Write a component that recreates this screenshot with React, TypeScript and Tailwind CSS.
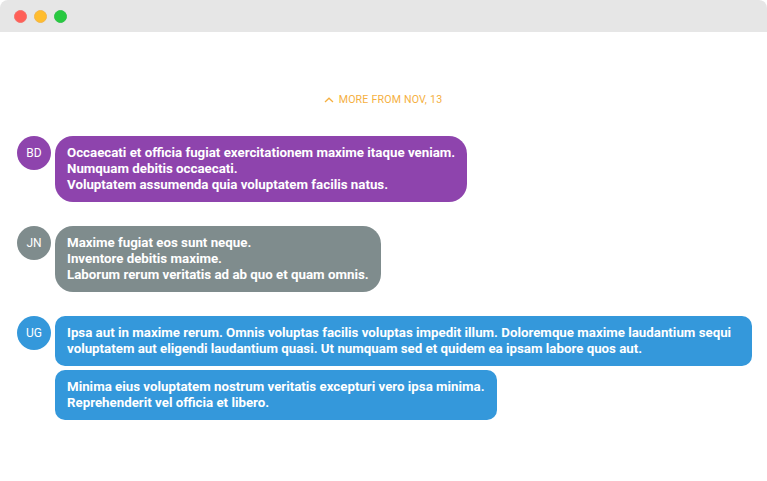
import React from 'react';

interface Group {
  initials: string;
  color: string;
  radius: string;
  messages: string[][];
}

const groups: Group[] = [
  {
    initials: 'BD',
    color: 'bg-[#8e44ad]',
    radius: 'rounded-[18px]',
    messages: [[
      'Occaecati et officia fugiat exercitationem maxime itaque veniam.',
      'Numquam debitis occaecati.',
      'Voluptatem assumenda quia voluptatem facilis natus.',
    ]],
  },
  {
    initials: 'JN',
    color: 'bg-[#7f8c8d]',
    radius: 'rounded-[18px]',
    messages: [[
      'Maxime fugiat eos sunt neque.',
      'Inventore debitis maxime.',
      'Laborum rerum veritatis ad ab quo et quam omnis.',
    ]],
  },
  {
    initials: 'UG',
    color: 'bg-[#3498db]',
    radius: 'rounded-[10px]',
    messages: [
      ['Ipsa aut in maxime rerum. Omnis voluptas facilis voluptas impedit illum. Doloremque maxime laudantium sequi voluptatem aut eligendi laudantium quasi. Ut numquam sed et quidem ea ipsam labore quos aut.'],
      [
        'Minima eius voluptatem nostrum veritatis excepturi vero ipsa minima.',
        'Reprehenderit vel officia et libero.',
      ],
    ],
  },
];

export default function App() {
  return (
    <div className="w-[767px] h-[481px] bg-white overflow-hidden font-['Roboto',sans-serif]">
      <div className="h-8 bg-[#e6e6e6] rounded-t-lg flex items-center gap-[7px] pl-[14px] pt-px">
        <span className="w-[13px] h-[13px] rounded-full bg-[#ff5f57] border border-[#f5716a]" />
        <span className="w-[13px] h-[13px] rounded-full bg-[#ffbd2e] border border-[#f2b64a]" />
        <span className="w-[13px] h-[13px] rounded-full bg-[#28c940] border border-[#2fc24a]" />
      </div>

      <div className="pt-[61px] pl-[17px] pr-[15px]">
        <div className="flex items-center justify-center gap-[5px] h-[14px] pr-[3px] text-[10.6px] leading-[14px] text-[#f5b041] uppercase tracking-[0.2px]">
          <svg width="10" height="6" viewBox="0 0 10 6" fill="none" stroke="#f5b041" strokeWidth="1.3">
            <path d="M1 5 L5 1.2 L9 5" />
          </svg>
          <span>More from Nov, 13</span>
        </div>

        <div className="mt-[29px] flex flex-col gap-6">
          {groups.map(group => (
            <div key={group.initials} className="flex gap-1 items-start">
              <div className={`w-[34px] h-[34px] shrink-0 rounded-full flex items-center justify-center text-white text-xs pb-px ${group.color}`}>
                {group.initials}
              </div>
              <div className="flex-1 min-w-0 flex flex-col gap-1 items-start">
                {group.messages.map((lines, index) => (
                  <div
                    key={index}
                    className={`px-3 py-[9px] text-white font-bold text-[13.3px] leading-4 ${group.color} ${group.radius}`}
                  >
                    {lines.map(line => (
                      <div key={line}>{line}</div>
                    ))}
                  </div>
                ))}
              </div>
            </div>
          ))}
        </div>
      </div>
    </div>
  );
}
